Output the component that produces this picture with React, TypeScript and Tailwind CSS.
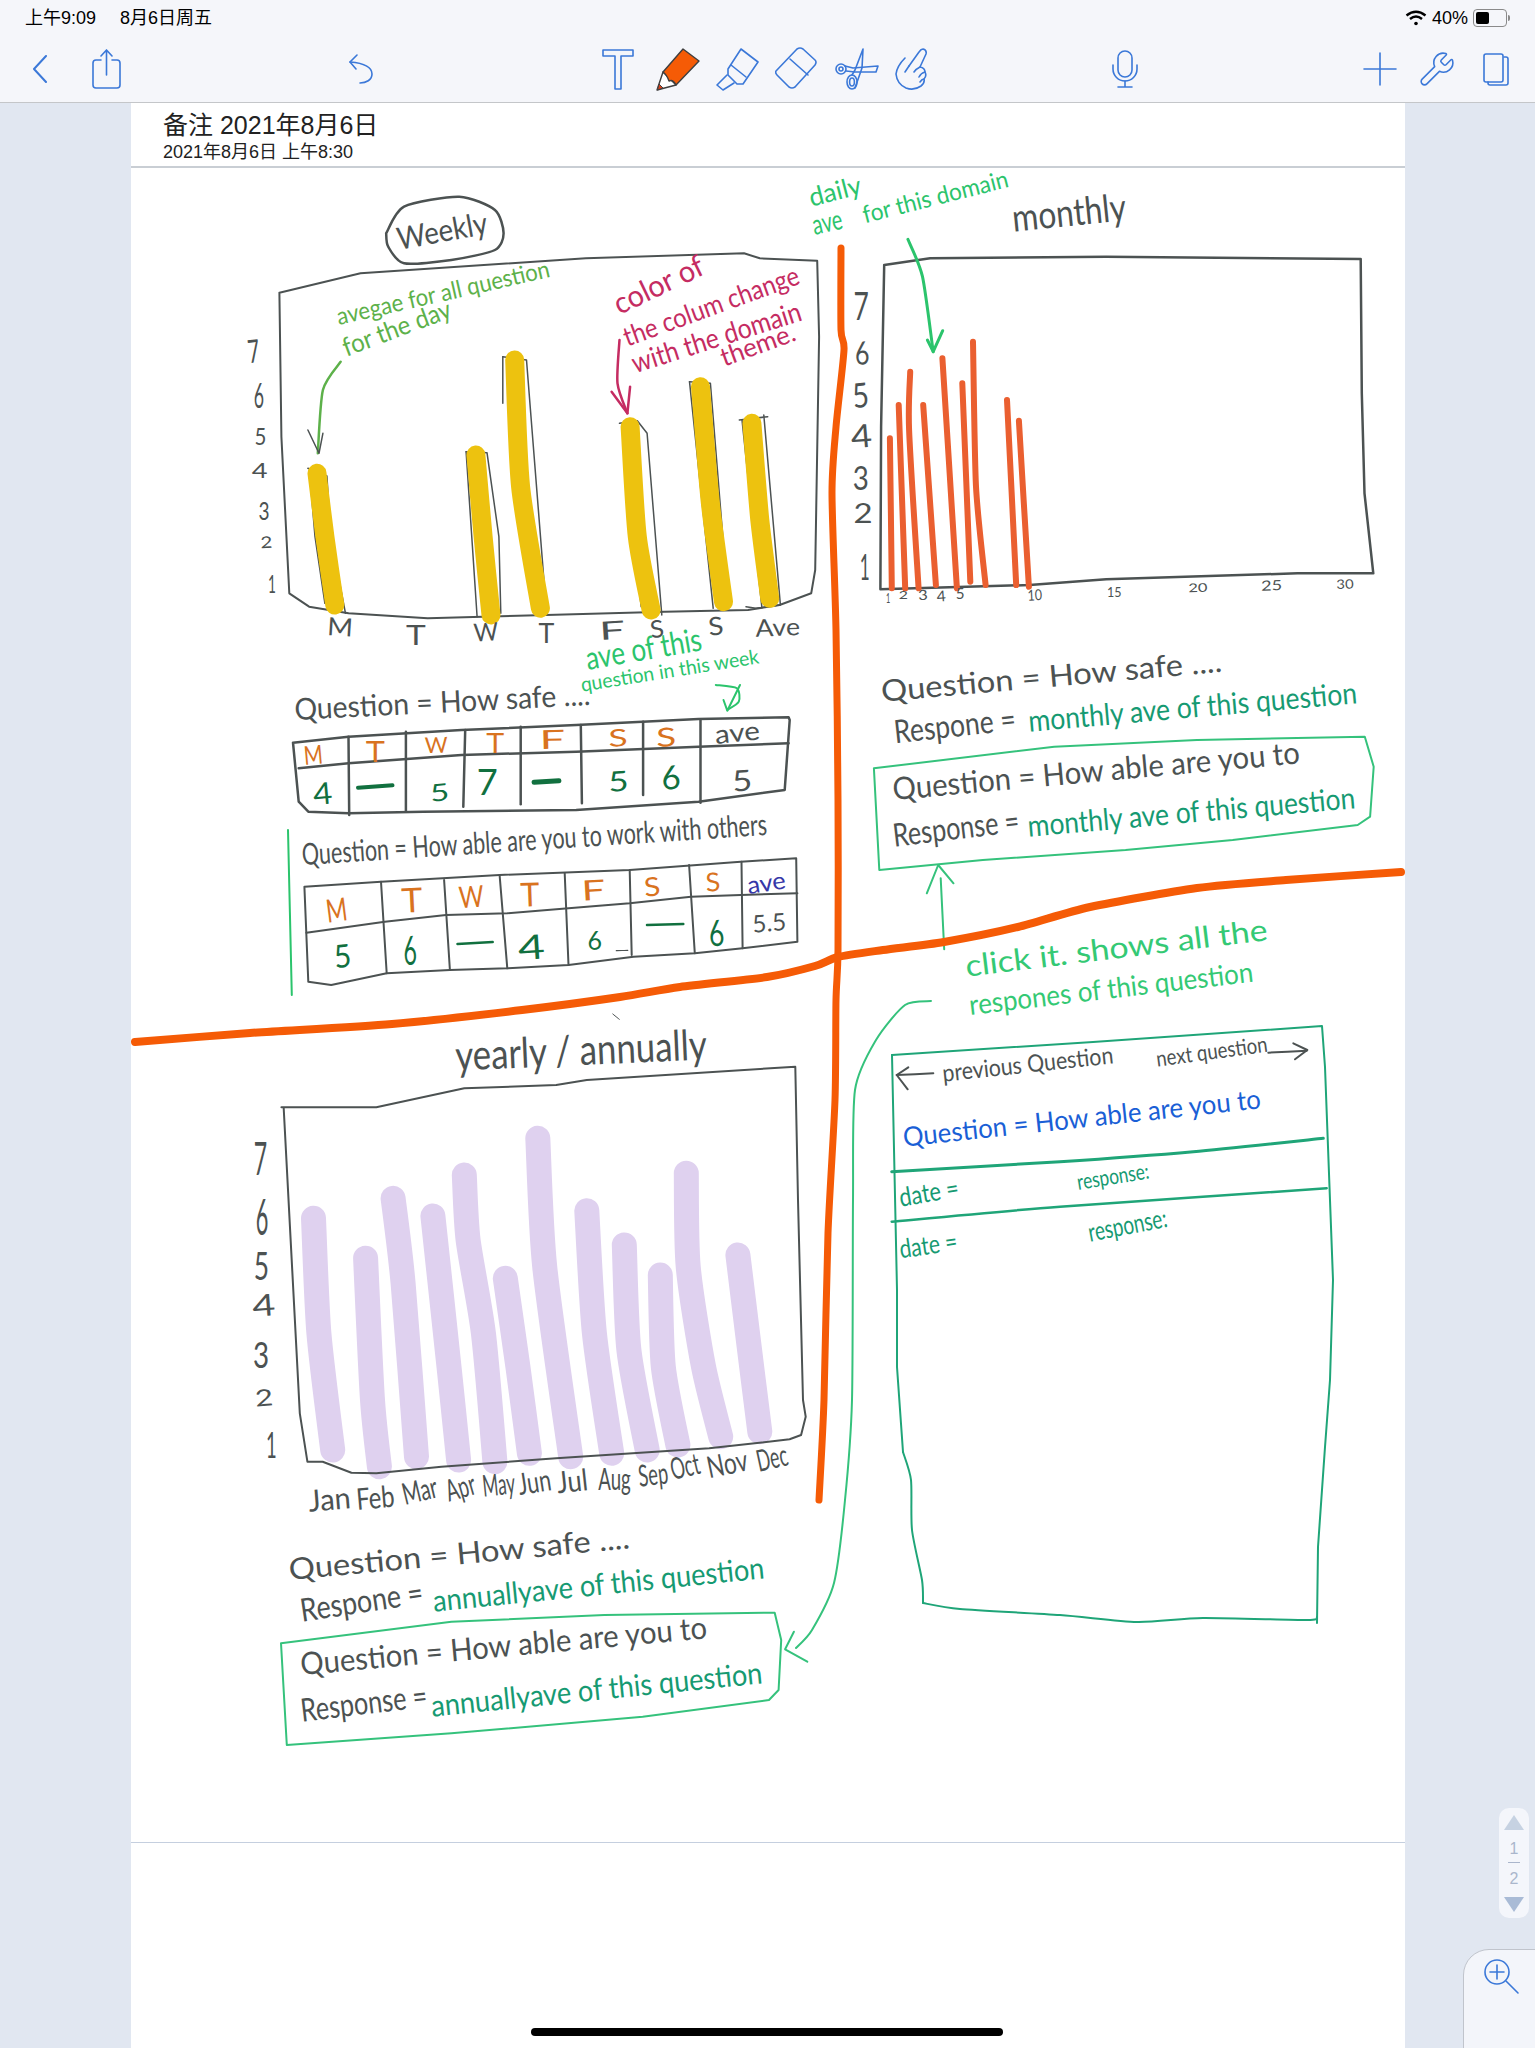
import React from "react";
import { Wrench } from "lucide-react";

type Pt = [number, number];
type Z = (x: number, y: number) => Pt;
const F: Z = (x, y) => [x, y];
const z3: Z = (x, y) => [230 + x * 0.3954, 170 + y / 3];
const z4: Z = (x, y) => [270 + x * 0.3827, 620 + y / 3];
const z5: Z = (x, y) => [800 + x * 0.3827, 160 + y / 3];
const z6: Z = (x, y) => [840 + x * 0.357, 640 + y / 3];
const z7: Z = (x, y) => [250 + x * 0.3827, 1000 + y / 3];
const z8: Z = (x, y) => [260 + x * 0.3827, 1500 + y / 3];
const z9: Z = (x, y) => [860 + x / 3, 1010 + y / 3];

const DARK = "#4c5252";
const ORANGE = "#d9731f";
const DGREEN = "#11703f";
const LIME = "#5db14a";
const MAG = "#c52c62";
const MINT = "#2bc46c";
const TEAL = "#169a72";
const BOX = "#35c27c";
const FRAME = "#1fa578";
const BLUE = "#1a5fd6";

function path(z: Z, raw: number[][], sharp: boolean) {
  const p = raw.map(([x, y]) => z(x, y));
  let d = `M${p[0][0].toFixed(1)} ${p[0][1].toFixed(1)}`;
  for (let i = 0; i < p.length - 1; i++) {
    const a = p[Math.max(i - 1, 0)];
    const b = p[i];
    const c = p[i + 1];
    const e = p[Math.min(i + 2, p.length - 1)];
    if (sharp) {
      d += ` L${c[0].toFixed(1)} ${c[1].toFixed(1)}`;
      continue;
    }
    const c1 = [b[0] + (c[0] - a[0]) / 8, b[1] + (c[1] - a[1]) / 8];
    const c2 = [c[0] - (e[0] - b[0]) / 8, c[1] - (e[1] - b[1]) / 8];
    d += ` C${c1[0].toFixed(1)} ${c1[1].toFixed(1)} ${c2[0].toFixed(1)} ${c2[1].toFixed(1)} ${c[0].toFixed(1)} ${c[1].toFixed(1)}`;
  }
  return d;
}

function S({ z, p, c = DARK, w = 2, k = false }: { z: Z; p: number[][]; c?: string; w?: number; k?: boolean }) {
  return <path d={path(z, p, k)} fill="none" stroke={c} strokeWidth={w} strokeLinecap="round" strokeLinejoin="round" />;
}

type TextRow = [Z, number, number, number, number, number, string, string];

const texts: TextRow[] = [
  [z3, 428, 240, 655, 190, 31, DARK, "Weekly"],
  [z3, 48, 580, 78, 576, 32, DARK, "7"],
  [z3, 60, 715, 86, 715, 34, DARK, "6"],
  [z3, 62, 825, 92, 825, 23, DARK, "5"],
  [z3, 55, 925, 95, 925, 21, DARK, "4"],
  [z3, 72, 1050, 100, 1050, 25, DARK, "3"],
  [z3, 78, 1135, 108, 1133, 16, DARK, "2"],
  [z3, 96, 1270, 116, 1270, 25, DARK, "1"],
  [z3, 275, 465, 812, 320, 24, LIME, "avegae for all question"],
  [z3, 295, 560, 565, 440, 26, LIME, "for the day"],
  [z3, 985, 435, 1205, 310, 30, MAG, "color of"],
  [z3, 1005, 530, 1445, 340, 27, MAG, "the colum change"],
  [z3, 1025, 610, 1450, 450, 28, MAG, "with the domain"],
  [z3, 1250, 590, 1435, 510, 26, MAG, "theme."],
  [z3, 245, 1395, 310, 1400, 25, DARK, "M"],
  [z3, 445, 1425, 495, 1425, 26, DARK, "T"],
  [z3, 618, 1415, 680, 1410, 25, DARK, "W"],
  [z3, 780, 1420, 820, 1420, 26, DARK, "T"],
  [z3, 935, 1410, 1000, 1405, 25, DARK, "F"],
  [z3, 1065, 1405, 1100, 1400, 24, DARK, "S"],
  [z3, 1212, 1397, 1250, 1392, 25, DARK, "S"],
  [z3, 1330, 1400, 1442, 1395, 24, DARK, "Ave"],

  [z4, 830, 150, 1132, 90, 32, MINT, "ave of this"],
  [z4, 815, 215, 1280, 130, 20, MINT, "question in this week"],
  [z4, 65, 300, 838, 255, 30, DARK, "Question = How safe ...."],
  [z4, 90, 435, 140, 430, 26, ORANGE, "M"],
  [z4, 250, 425, 300, 425, 28, ORANGE, "T"],
  [z4, 405, 400, 465, 398, 22, ORANGE, "W"],
  [z4, 565, 400, 612, 400, 26, ORANGE, "T"],
  [z4, 705, 387, 772, 385, 26, ORANGE, "F"],
  [z4, 885, 380, 935, 378, 24, ORANGE, "S"],
  [z4, 1010, 380, 1062, 378, 26, ORANGE, "S"],
  [z4, 1165, 372, 1282, 358, 26, DARK, "ave"],
  [z4, 115, 555, 165, 550, 30, DGREEN, "4"],
  [z4, 420, 545, 470, 540, 24, DGREEN, "5"],
  [z4, 540, 525, 595, 525, 36, DGREEN, "7"],
  [z4, 885, 515, 938, 512, 28, DGREEN, "5"],
  [z4, 1025, 510, 1075, 505, 33, DGREEN, "6"],
  [z4, 1210, 515, 1262, 510, 29, DARK, "5"],
  [z4, 85, 735, 1300, 645, 30, DARK, "Question = How able are you to work with others"],
  [z4, 150, 908, 205, 900, 32, ORANGE, "M"],
  [z4, 345, 878, 400, 875, 34, ORANGE, "T"],
  [z4, 495, 865, 560, 860, 30, ORANGE, "W"],
  [z4, 655, 860, 705, 858, 33, ORANGE, "T"],
  [z4, 815, 842, 877, 838, 28, ORANGE, "F"],
  [z4, 980, 830, 1022, 825, 26, ORANGE, "S"],
  [z4, 1140, 815, 1178, 812, 26, ORANGE, "S"],
  [z4, 1250, 822, 1350, 805, 24, "#3637a8", "ave"],
  [z4, 170, 1045, 215, 1040, 32, DGREEN, "5"],
  [z4, 350, 1035, 385, 1033, 40, DGREEN, "6"],
  [z4, 650, 1020, 720, 1015, 34, DGREEN, "4"],
  [z4, 830, 990, 868, 988, 26, DGREEN, "6"],
  [z4, 1150, 980, 1190, 975, 36, DGREEN, "6"],
  [z4, 1262, 938, 1350, 930, 24, DARK, "5.5"],

  [z5, 30, 140, 165, 100, 26, MINT, "daily"],
  [z5, 38, 225, 115, 205, 28, MINT, "ave"],
  [z5, 170, 190, 548, 80, 24, MINT, "for this domain"],
  [z5, 558, 215, 855, 180, 38, DARK, "monthly"],
  [z5, 140, 480, 180, 480, 39, DARK, "7"],
  [z5, 145, 615, 183, 612, 32, DARK, "6"],
  [z5, 140, 745, 183, 740, 34, DARK, "5"],
  [z5, 135, 865, 190, 860, 32, DARK, "4"],
  [z5, 138, 990, 180, 990, 32, DARK, "3"],
  [z5, 140, 1090, 190, 1090, 26, DARK, "2"],
  [z5, 156, 1260, 182, 1260, 36, DARK, "1"],
  [z5, 225, 1328, 236, 1328, 14, DARK, "1"],
  [z5, 258, 1318, 282, 1318, 11, DARK, "2"],
  [z5, 310, 1321, 335, 1319, 14, DARK, "3"],
  [z5, 358, 1325, 382, 1323, 15, DARK, "4"],
  [z5, 407, 1318, 430, 1318, 15, DARK, "5"],
  [z5, 595, 1322, 633, 1320, 15, DARK, "10"],
  [z5, 802, 1310, 840, 1310, 14, DARK, "15"],
  [z5, 1015, 1297, 1065, 1295, 12, DARK, "20"],
  [z5, 1205, 1292, 1260, 1290, 14, DARK, "25"],
  [z5, 1402, 1287, 1447, 1285, 13, DARK, "30"],

  [z6, 118, 185, 1072, 95, 30, DARK, "Question = How safe ...."],
  [z6, 155, 310, 495, 270, 32, DARK, "Respone ="],
  [z6, 530, 275, 1450, 190, 30, TEAL, "monthly ave of this question"],
  [z6, 150, 480, 1290, 370, 31, DARK, "Question = How able are you to"],
  [z6, 152, 620, 505, 575, 32, DARK, "Response ="],
  [z6, 528, 590, 1445, 505, 30, TEAL, "monthly ave of this question"],
  [z6, 355, 1010, 1200, 900, 30, "#34c974", "click it. shows all the"],
  [z6, 365, 1125, 1160, 1025, 28, "#34c974", "respones of this question"],

  [z7, 538, 212, 1195, 178, 42, DARK, "yearly / annually"],
  [z7, 10, 525, 45, 525, 46, DARK, "7"],
  [z7, 15, 705, 48, 705, 50, DARK, "6"],
  [z7, 10, 840, 50, 840, 38, DARK, "5"],
  [z7, 8, 950, 68, 945, 30, DARK, "4"],
  [z7, 8, 1105, 50, 1105, 37, DARK, "3"],
  [z7, 15, 1220, 62, 1215, 23, DARK, "2"],
  [z7, 42, 1375, 70, 1375, 36, DARK, "1"],
  [z7, 155, 1535, 265, 1525, 30, DARK, "Jan"],
  [z7, 280, 1530, 380, 1520, 30, DARK, "Feb"],
  [z7, 405, 1515, 495, 1490, 30, DARK, "Mar"],
  [z7, 520, 1505, 595, 1480, 30, DARK, "Apr"],
  [z7, 610, 1490, 695, 1480, 30, DARK, "May"],
  [z7, 705, 1485, 790, 1470, 30, DARK, "Jun"],
  [z7, 805, 1480, 885, 1470, 30, DARK, "Jul"],
  [z7, 910, 1470, 995, 1470, 30, DARK, "Aug"],
  [z7, 1018, 1460, 1095, 1450, 30, DARK, "Sep"],
  [z7, 1105, 1440, 1180, 1420, 30, DARK, "Oct"],
  [z7, 1200, 1435, 1305, 1410, 30, DARK, "Nov"],
  [z7, 1330, 1415, 1410, 1395, 30, DARK, "Dec"],

  [z8, 78, 240, 968, 145, 30, DARK, "Question = How safe ...."],
  [z8, 110, 365, 430, 310, 32, DARK, "Respone ="],
  [z8, 455, 335, 1320, 235, 30, TEAL, "annuallyave of this question"],
  [z8, 108, 525, 1170, 415, 31, DARK, "Question = How able are you to"],
  [z8, 110, 665, 440, 620, 32, DARK, "Response ="],
  [z8, 450, 650, 1315, 550, 30, TEAL, "annuallyave of this question"],

  [z9, 250, 215, 762, 160, 24, DARK, "previous Question"],
  [z9, 892, 170, 1225, 125, 22, DARK, "next question"],
  [z9, 132, 410, 1205, 295, 27, BLUE, "Question = How able are you to"],
  [z9, 122, 590, 300, 560, 26, TEAL, "date ="],
  [z9, 655, 540, 870, 505, 22, TEAL, "response:"],
  [z9, 122, 745, 295, 720, 26, TEAL, "date ="],
  [z9, 690, 695, 925, 650, 26, TEAL, "response:"],
];

function Hand({ row }: { row: TextRow }) {
  const [z, a, b, c, d, size, color, text] = row;
  const [x1, y1] = z(a, b);
  const [x2, y2] = z(c, d);
  const len = Math.hypot(x2 - x1, y2 - y1);
  const ang = (Math.atan2(y2 - y1, x2 - x1) * 180) / Math.PI;
  return (
    <text
      x={x1}
      y={y1}
      transform={`rotate(${ang.toFixed(2)} ${x1.toFixed(1)} ${y1.toFixed(1)})`}
      textLength={len}
      lengthAdjust="spacingAndGlyphs"
      fontSize={size}
      fill={color}
    >
      {text}
    </text>
  );
}

function Sketch() {
  return (
    <svg viewBox="131 168 1274 1674" className="block overflow-visible w-[1274px] h-[1674px] font-['Lato',sans-serif]">
      {/* Weekly */}
      <S z={z3} p={[[395,190],[440,110],[580,80],[670,120],[692,190],[670,240],[560,270],[440,280],[400,230],[395,190]]} w={2.5} />
      <S k z={z3} p={[[125,368],[330,310],[900,265],[1300,250],[1340,265],[1485,272],[1490,500],[1480,1200],[1470,1270],[1390,1305],[1310,1320],[1100,1325],[800,1335],[500,1345],[300,1330],[200,1310],[150,1270],[130,800],[125,368]]} />
      {[
        [[197,895],[245,918],[255,1100],[292,1330]],
        [[205,960],[215,1100],[240,1300]],
        [[597,845],[650,848],[680,1100],[685,1330]],
        [[597,845],[625,1340]],
        [[690,560],[750,570],[800,1320]],
        [[690,560],[690,700]],
        [[985,760],[1030,752],[1055,790],[1092,1335]],
        [[995,840],[1040,1310]],
        [[1162,635],[1215,640],[1260,1300]],
        [[1162,635],[1222,1315]],
        [[1288,750],[1360,740]],
        [[1350,735],[1392,1305]],
        [[1295,750],[1345,1310]],
        [[1305,1310],[1330,1315],[1390,1305]],
      ].map((p, i) => (
        <S key={i} k z={z3} p={p} w={1.5} />
      ))}
      {[
        [[220,910],[240,1100],[265,1305]],
        [[622,855],[640,1100],[660,1335]],
        [[720,570],[735,950],[785,1315]],
        [[1012,770],[1030,1100],[1065,1320]],
        [[1190,650],[1215,1000],[1248,1295]],
        [[1320,760],[1340,1050],[1365,1285]],
      ].map((p, i) => (
        <S key={i} z={z3} p={p} c="#edc20f" w={19} />
      ))}
      <S z={z3} p={[[280,575],[235,660],[222,850]]} c={LIME} w={2.5} />
      <S k z={z3} p={[[197,780],[225,850],[235,790]]} c={DARK} w={1.5} />
      <S z={z3} p={[[985,510],[980,640],[1005,730]]} c={MAG} w={2.5} />
      <S k z={z3} p={[[965,665],[1005,730],[1012,650]]} c={MAG} w={2.5} />

      {/* Weekly tables */}
      <S z={z4} p={[[1165,195],[1220,205],[1225,245],[1195,270]]} c={MINT} />
      <S k z={z4} p={[[1185,240],[1195,272],[1228,195]]} c={MINT} />
      <S k z={z4} p={[[60,368],[205,350],[500,330],[800,315],[1120,297],[1355,292],[1358,300],[1345,510],[1120,545],[800,570],[400,575],[205,580],[100,575],[75,545],[60,368]]} w={2.5} />
      <S k z={z4} p={[[75,445],[205,430],[500,405],[800,395],[1120,380],[1355,370]]} w={2.5} />
      {[
        [[205,350],[207,585]],
        [[355,335],[355,575]],
        [[510,330],[505,560]],
        [[655,320],[655,553]],
        [[812,315],[815,550]],
        [[975,305],[975,525]],
        [[1125,300],[1125,548]],
      ].map((p, i) => (
        <S key={i} k z={z4} p={p} w={2.5} />
      ))}
      <S z={z4} p={[[230,503],[320,496]]} c={DGREEN} w={4} />
      <S z={z4} p={[[690,487],[755,482]]} c={DGREEN} w={5} />
      <S z={z4} p={[[47,630],[57,1125]]} c={MINT} w={2} />
      <S k z={z4} p={[[90,800],[290,785],[600,765],[940,750],[1230,725],[1375,715],[1378,965],[1235,985],[1110,1000],[950,1010],[780,1035],[620,1045],[470,1050],[305,1060],[160,1095],[100,1085],[90,800]]} />
      <S k z={z4} p={[[95,938],[300,905],[460,885],[620,880],[780,865],[940,850],[1100,830],[1230,825],[1378,820]]} />
      {[
        [[290,785],[305,1060]],
        [[455,780],[470,1050]],
        [[600,765],[620,1045]],
        [[770,760],[780,1035]],
        [[940,750],[945,1005]],
        [[1095,735],[1110,1000]],
        [[1232,725],[1235,985]],
      ].map((p, i) => (
        <S key={i} k z={z4} p={p} />
      ))}
      <S z={z4} p={[[490,972],[582,966]]} c={DGREEN} w={2.5} />
      <S z={z4} p={[[905,992],[935,991]]} w={1.2} />
      <S z={z4} p={[[985,915],[1080,912]]} c={DGREEN} w={2.5} />

      {/* Monthly */}
      <S k z={z5} p={[[220,315],[340,295],[800,290],[1465,297],[1468,700],[1475,1000],[1498,1240],[1300,1240],[800,1258],[600,1275],[210,1288],[212,800],[220,315]]} w={2.5} />
      <S z={z5} p={[[282,238],[320,350],[348,575]]} c={MINT} w={3} />
      <S k z={z5} p={[[333,540],[348,575],[373,512]]} c={MINT} w={3} />
      {[
        [[235,835],[240,1285]],
        [[258,735],[275,1285]],
        [[288,635],[285,810],[310,1285]],
        [[322,735],[355,1275]],
        [[372,595],[410,1285]],
        [[424,670],[445,1265]],
        [[452,545],[460,980],[485,1275]],
        [[541,720],[565,1275]],
        [[572,782],[598,1280]],
      ].map((p, i) => (
        <S key={i} z={z5} p={p} c="#ea5f30" w={6} />
      ))}

      {/* Monthly response box */}
      <S k z={z6} p={[[95,385],[600,320],[1000,300],[1470,290],[1495,380],[1485,530],[1450,555],[1100,600],[800,630],[400,660],[110,690],[95,385]]} c={BOX} />
      <S z={z6} p={[[292,928],[282,715]]} c={BOX} />
      <S k z={z6} p={[[243,760],[275,675],[318,730]]} c={BOX} />

      {/* Yearly */}
      <S z={z7} p={[[948,42],[965,58]]} w={1} />
      {[
        [[166,655],[180,1000],[216,1350]],
        [[302,775],[320,1200],[338,1400]],
        [[374,595],[400,850],[435,1370]],
        [[478,648],[520,1100],[545,1380]],
        [[560,525],[570,720],[610,1000],[640,1385]],
        [[667,835],[700,1100],[730,1360]],
        [[752,415],[770,800],[838,1370]],
        [[880,632],[900,1000],[945,1360]],
        [[978,735],[990,1050],[1038,1350]],
        [[1072,825],[1080,1100],[1118,1335]],
        [[1140,520],[1145,800],[1185,1100],[1230,1310]],
        [[1275,765],[1300,1000],[1332,1295]],
      ].map((p, i) => (
        <S key={i} z={z7} p={p} c="#dfd1ef" w={25} />
      ))}
      <S k z={z7} p={[[82,322],[330,322],[560,265],[800,255],[880,240],[1425,200],[1432,600],[1445,1200],[1452,1250],[1440,1305],[1410,1318],[1200,1345],[800,1375],[500,1400],[330,1420],[265,1418],[190,1385],[150,1385],[130,1240],[88,325]]} />
      <S k z={z8} p={[[55,430],[500,365],[900,345],[1345,338],[1362,420],[1355,570],[1330,600],[1000,650],[500,700],[70,735],[55,430]]} c={BOX} />
      <S z={F} p={[[931,1001],[905,1005],[876,1040],[855,1090],[853,1200],[852,1400],[845,1500],[834,1583],[812,1630],[796,1648]]} c={BOX} />
      <S k z={z8} p={[[1395,395],[1372,448],[1430,485]]} c={BOX} />

      {/* Response detail screen */}
      <S k z={F} p={[[892,1055],[1093,1042],[1322,1026],[1325,1067],[1333,1280],[1330,1380],[1325,1447],[1318,1547],[1317,1623]]} c={FRAME} />
      <S k z={F} p={[[892,1055],[897,1290],[897,1367],[903,1452]]} c={FRAME} />
      <S z={F} p={[[903,1452],[911,1480],[912,1530],[922,1580],[923,1603]]} c={FRAME} />
      <S z={F} p={[[923,1603],[960,1609],[1060,1615],[1137,1622],[1203,1618],[1307,1620],[1317,1617]]} c={FRAME} />
      <S z={z9} p={[[95,485],[600,455],[1000,425],[1390,385]]} c={FRAME} w={3} />
      <S z={z9} p={[[95,635],[600,590],[1400,535]]} c={FRAME} w={2.5} />
      <S z={z9} p={[[110,195],[220,190]]} />
      <S k z={z9} p={[[145,172],[110,195],[143,238]]} />
      <S z={z9} p={[[1225,128],[1340,122]]} />
      <S k z={z9} p={[[1300,100],[1342,120],[1305,148]]} />

      {/* Dividers */}
      <S z={F} p={[[841,248],[841,330],[844,350],[836,427],[832,493],[836,630],[838,800],[838,950],[836,1000],[835,1100],[828,1233],[824,1400],[819,1500]]} c="#f55b06" w={7} />
      <S z={F} p={[[135,1042],[250,1033],[392,1024],[522,1010],[620,997],[680,987],[767,977],[815,966],[838,957],[883,950],[944,942],[1018,927],[1090,907],[1197,888],[1286,880],[1401,872]]} c="#f55b06" w={8} />

      {texts.map((row, i) => (
        <Hand key={i} row={row} />
      ))}
    </svg>
  );
}

const ic = { fill: "none", stroke: "#3b78d8", strokeWidth: 1.6, strokeLinecap: "round", strokeLinejoin: "round" } as const;

function Toolbar() {
  return (
    <div className="flex items-center h-[66px] pl-[32px]">
      <svg width="16" height="28" viewBox="0 0 16 28" {...ic} strokeWidth={2}><path d="M14 1 L2 14 L14 27" /></svg>
      <svg className="ml-[44px]" width="30" height="40" viewBox="0 0 30 40" {...ic}>
        <path d="M9 11 H4 a3 3 0 0 0 -3 3 V36 a3 3 0 0 0 3 3 H25 a3 3 0 0 0 3 -3 V14 a3 3 0 0 0 -3 -3 H20" />
        <path d="M14.5 26 V1 M9 7 L14.5 1 L20 7" />
      </svg>
      <svg className="ml-[226px]" width="26" height="30" viewBox="0 0 26 30" {...ic}>
        <path d="M9 1 L2 8 L8 15" />
        <path d="M2 8 C14 9 24 12 24 20 C24 26 18 29 12 29" />
      </svg>
      <svg className="ml-[228px]" width="32" height="41" viewBox="0 0 32 41" {...ic}><path d="M1 1 H31 V7 H19 V40 H13 V7 H1 Z" /></svg>
      <svg className="ml-[22px]" width="44" height="43" viewBox="0 0 44 43">
        <path d="M7 24 L1 42 L20 37 Z" fill="#fff" stroke="#3f3f3f" strokeWidth="1.4" strokeLinejoin="round" />
        <path d="M1.5 42 L3 36 L7 40 Z" fill="#d9401a" stroke="#3f3f3f" strokeWidth="1" />
        <path d="M7 24 L27 1 L43 13 L20 37 Q17 31 13 33 Q11 27 7 24 Z" fill="#f55b06" stroke="#3f3f3f" strokeWidth="1.4" strokeLinejoin="round" />
      </svg>
      <svg className="ml-[16px]" width="44" height="43" viewBox="0 0 44 43" {...ic}>
        <path d="M25 1 L42 14 L27 36 L21 36 L12 27 L12 21 Z" />
        <path d="M11 27 L1 37 L7 42 L18 35" />
        <path d="M15 17 L30 29" />
      </svg>
      <svg className="ml-[15px]" width="44" height="44" viewBox="0 0 44 44" {...ic}>
        <path d="M1 24 L22 2 Q25 0 28 2 L40 13 Q42 15 40 18 L20 40 Q17 42 14 40 L2 28 Q0 26 1 24 Z" />
        <path d="M15 12 L33 28" />
      </svg>
      <svg className="ml-[16px]" width="44" height="42" viewBox="0 0 44 42" {...ic}>
        <circle cx="6" cy="21" r="5" />
        <circle cx="6" cy="21" r="2" />
        <ellipse cx="17" cy="34" rx="5" ry="7" />
        <ellipse cx="17" cy="34" rx="2.4" ry="4" />
        <path d="M17 27 L20 22 L28 1 L27 20 L20 40" />
        <path d="M10 18 L18 20 L43 18 L41 24 L20 24 L11 23" />
      </svg>
      <svg className="ml-[15px]" width="36" height="42" viewBox="0 0 36 42" {...ic}>
        <path d="M11 10 Q3 18 2 26 Q3 36 12 40 Q20 43 27 38 Q31 35 30 31 Q33 28 31 24 Q31 20 26 19 L32 6 Q33 2 29 1 Q27 1 25 4 L15 18" />
        <path d="M15 18 L11 24 M20 24 Q22 21 26 19 M25 29 Q27 25 31 24 M26 34 Q28 31 30 31" />
      </svg>
      <svg className="ml-[182px]" width="26" height="38" viewBox="0 0 26 38" {...ic}>
        <rect x="6" y="1" width="14" height="26" rx="7" />
        <path d="M1 15 V19 a12 12 0 0 0 24 0 V15" />
        <path d="M13 31 V37 M6 37 H20" />
      </svg>
      <svg className="ml-[225px]" width="34" height="34" viewBox="0 0 34 34" {...ic}><path d="M17 1 V33 M1 17 H33" /></svg>
      <Wrench className="ml-[21px] text-[#3b78d8]" size={38} strokeWidth={1} />
      <svg className="ml-[27px]" width="26" height="33" viewBox="0 0 26 33" {...ic}>
        <rect x="1" y="1" width="19" height="28" rx="2" />
        <path d="M21 4 h2 a2 2 0 0 1 2 2 V30 a2 2 0 0 1 -2 2 H7 a2 2 0 0 1 -2 -2 v-1" />
      </svg>
    </div>
  );
}

export default function App() {
  return (
    <div className="relative w-[1535px] h-[2048px] overflow-hidden bg-[#e1e7f1] font-['Liberation_Sans','Noto_Sans_CJK_SC',sans-serif]">
      <header className="h-[103px] bg-[#f5f6fa] border-b border-[#c4c6c9]">
        <div className="flex items-center justify-between h-[36px] pl-[25px] pr-[25px] text-[18px] text-black">
          <div className="flex gap-[24px]">
            <span>上午9:09</span>
            <span>8月6日周五</span>
          </div>
          <div className="flex items-center gap-[5px]">
            <svg width="22" height="16" viewBox="0 0 22 16" fill="none" stroke="#000" strokeWidth="2.4">
              <path d="M1.5 5.5 Q11 -2 20.5 5.5" />
              <path d="M5 9 Q11 4 17 9" />
              <circle cx="11" cy="13.5" r="1.8" fill="#000" stroke="none" />
            </svg>
            <span>40%</span>
            <div className="flex items-center">
              <div className="w-[34px] h-[18px] border border-[#8a8a8a] rounded-[4px] p-[2px]">
                <div className="w-[13px] h-full bg-black rounded-[2px]" />
              </div>
              <div className="w-[2px] h-[6px] bg-[#8a8a8a] rounded-r-[2px] ml-[1px]" />
            </div>
          </div>
        </div>
        <Toolbar />
      </header>

      <div className="flex h-[1945px]">
        <div className="w-[131px] shrink-0" />
        <main className="w-[1274px] shrink-0 bg-white flex flex-col">
          <div className="h-[65px] border-b-2 border-[#c9ced4] pl-[32px] pt-[6px] text-[#222]">
            <div className="text-[25px] leading-[32px]">备注 2021年8月6日</div>
            <div className="text-[18px] leading-[22px]">2021年8月6日 上午8:30</div>
          </div>
          <div className="h-[1675px] border-b border-[#c5cfdf] shrink-0">
            <Sketch />
          </div>
        </main>
      </div>

      {/* Page stepper */}
      <div className="absolute left-[1499px] top-[1808px] w-[30px] h-[110px] rounded-[10px] bg-[#f4f6fb] flex flex-col items-center pt-[7px] text-[#aab6cc] text-[16px] leading-[16px]">
        <div className="w-0 h-0 border-x-[10px] border-x-transparent border-b-[15px] border-b-[#c6d2e2]" />
        <span className="mt-[11px]">1</span>
        <div className="w-[12px] h-px bg-[#aab6cc] mt-[5px] mb-[8px]" />
        <span>2</span>
        <div className="mt-[10px] w-0 h-0 border-x-[10px] border-x-transparent border-t-[15px] border-t-[#a9bbd6]" />
      </div>

      {/* Zoom tab */}
      <div className="absolute left-[1463px] top-[1949px] w-[80px] h-[110px] rounded-tl-[26px] bg-[#f3f5fa] border border-[#c0c4cc] pl-[20px] pt-[9px]">
        <svg width="36" height="36" viewBox="0 0 36 36" fill="none" stroke="#3b78d8" strokeWidth="1.6" strokeLinecap="round">
          <circle cx="13" cy="13" r="12" />
          <path d="M13 6 V20 M6 13 H20 M22 22 L34 34" />
        </svg>
      </div>

      {/* Home indicator */}
      <div className="absolute left-[531px] top-[2028px] w-[472px] h-[8px] rounded-full bg-black" />
    </div>
  );
}
